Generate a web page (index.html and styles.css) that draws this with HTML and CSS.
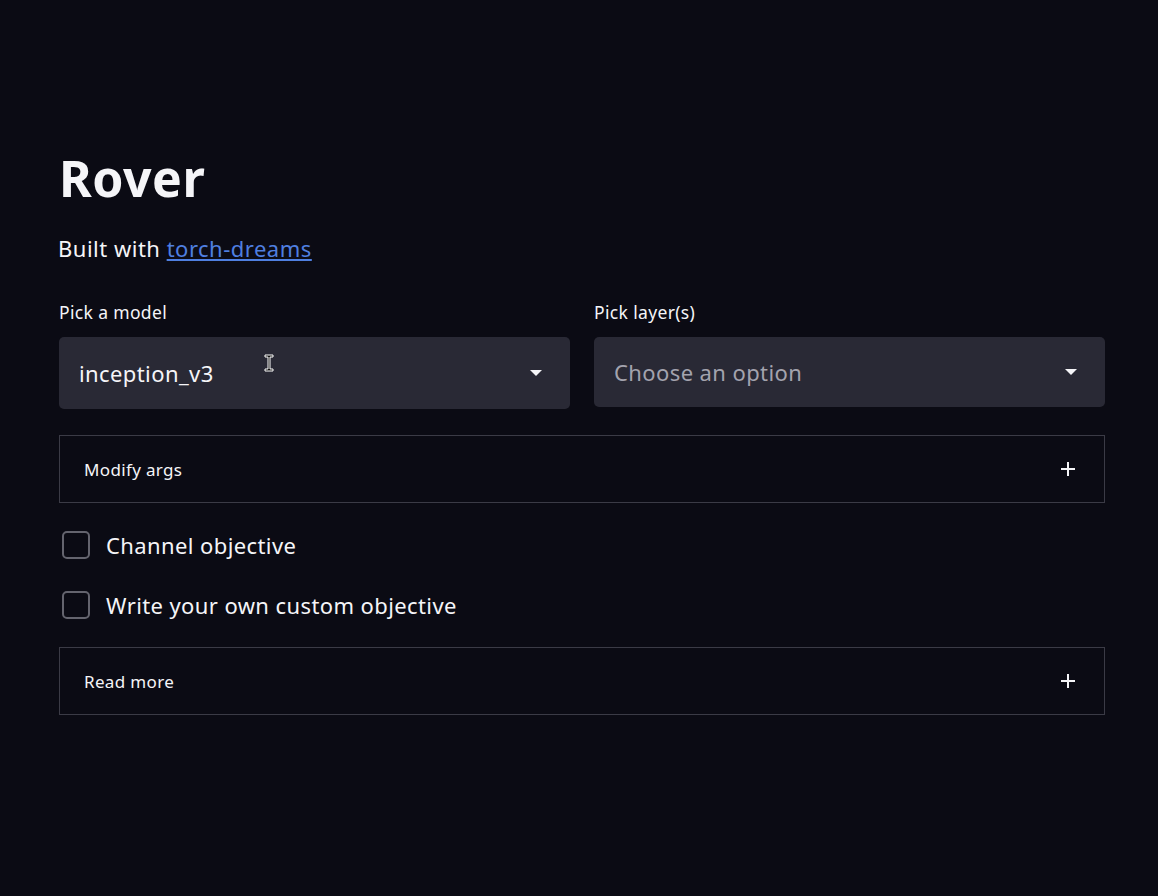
FILE: index.html
```html
<!DOCTYPE html>
<html lang="en">
<head>
    <meta charset="UTF-8">
    <meta name="viewport" content="width=device-width, initial-scale=1.0">
    <title>Rover</title>
    <link rel="stylesheet" href="styles.css">
</head>
<body>
    <div class="container">
        <h1>Rover</h1>
        <p class="subtitle">Built with <a href="#">torch-dreams</a></p>

        <div class="selects">
            <div class="field">
                <label>Pick a model</label>
                <div class="select">
                    <span class="value">inception_v3</span>
                    <span class="caret"></span>
                    <svg class="cursor" width="10" height="18" viewBox="0 0 10 18">
                        <path d="M1 1h8v2H6v12h3v2H1v-2h3V3H1z" fill="#111" stroke="#fff" stroke-width="1"/>
                    </svg>
                </div>
            </div>
            <div class="field">
                <label>Pick layer(s)</label>
                <div class="select select-short">
                    <span class="placeholder">Choose an option</span>
                    <span class="caret"></span>
                </div>
            </div>
        </div>

        <div class="expander">
            <span>Modify args</span>
            <svg class="plus" width="14" height="14" viewBox="0 0 14 14">
                <path d="M7 0v14M0 7h14" stroke="#f5f5f8" stroke-width="2"/>
            </svg>
        </div>

        <div class="checks">
            <div class="check"><span class="box"></span>Channel objective</div>
            <div class="check"><span class="box"></span>Write your own custom objective</div>
        </div>

        <div class="expander">
            <span>Read more</span>
            <svg class="plus" width="14" height="14" viewBox="0 0 14 14">
                <path d="M7 0v14M0 7h14" stroke="#f5f5f8" stroke-width="2"/>
            </svg>
        </div>
    </div>
</body>
</html>
```

FILE: styles.css
```css
body {
    font-family: "Noto Sans", "Open Sans", sans-serif;
    background-color: #0b0b14;
    color: #f5f5f8;
    margin: 0;
    padding: 0;
}

.container {
    width: 1046px;
    margin: 0 auto 0 59px;
    padding-top: 140px;
}

h1 {
    font-size: 50px;
    font-weight: 700;
    margin: 0;
    line-height: 76px;
    letter-spacing: 0.5px;
}

.subtitle {
    font-size: 22px;
    margin: 16px 0 0 -1px;
    line-height: 32px;
    letter-spacing: 0.5px;
}

.subtitle a {
    color: #4f7fe0;
}

.selects {
    display: flex;
    gap: 24px;
    margin-top: 36px;
}

.field {
    flex: 1;
}

.field label {
    display: block;
    font-size: 17.5px;
    letter-spacing: 0.35px;
    line-height: 24px;
    margin-bottom: 13px;
}

.select {
    position: relative;
    height: 72px;
    background-color: #292935;
    border-radius: 5px;
    display: flex;
    align-items: center;
    justify-content: space-between;
    padding: 0 28px 0 20px;
    font-size: 22px;
    letter-spacing: 0.4px;
}

.select-short {
    height: 70px;
}

.placeholder {
    color: #a3a3ae;
}

.caret {
    width: 0;
    height: 0;
    border-left: 6px solid transparent;
    border-right: 6px solid transparent;
    border-top: 6px solid #f5f5f8;
}

.cursor {
    position: absolute;
    left: 205px;
    top: 17px;
}

.expander {
    margin-top: 26px;
    height: 66px;
    border: 1px solid #3b3b46;
    display: flex;
    align-items: center;
    justify-content: space-between;
    padding: 0 29px 0 24px;
    font-size: 17px;
    letter-spacing: 0.35px;
}

.checks {
    margin-top: 26px;
    margin-bottom: 14px;
}

.check {
    display: flex;
    align-items: center;
    height: 32px;
    font-size: 22px;
    letter-spacing: 0.4px;
    margin-bottom: 28px;
    padding-left: 3px;
}

.check:last-child {
    margin-bottom: 0;
}

.box {
    width: 24px;
    height: 24px;
    border: 2px solid #64646e;
    border-radius: 5px;
    margin-right: 16px;
}
```
